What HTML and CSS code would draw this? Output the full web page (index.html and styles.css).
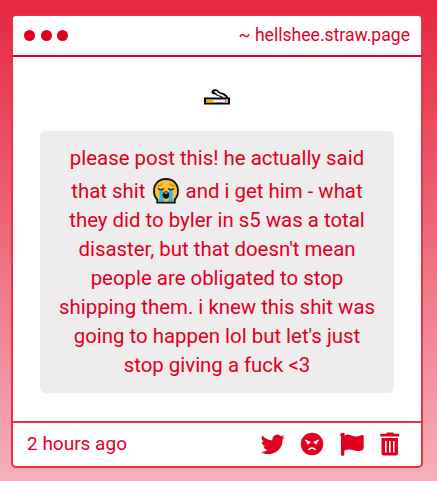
FILE: index.html
```html
<!DOCTYPE html>
<html lang="en">
<head>
<meta charset="utf-8">
<title>hellshee.straw.page</title>
<link rel="stylesheet" href="styles.css">
</head>
<body>
<article class="card">
  <header class="card-header">
    <div class="dots"><span></span><span></span><span></span></div>
    <div class="site">~ hellshee.straw.page</div>
  </header>
  <main class="card-body">
    <svg class="cigarette" viewBox="0 0 28 16" aria-hidden="true">
      <path d="M10 4.500C8.500 2 11 .8 13 1.300C15.500 1.800 15 4 17.500 4.300C20.500 4.500 22.500 6 24.500 9" fill="none" stroke="#000" stroke-width="2"/>
      <path d="M10 4.500C12 3 13 5.500 15 6C17 6 18 8 20 9" fill="none" stroke="#000" stroke-width="2"/>
      <path d="M12 3.300Q14 2.600 15 5Q19 5.600 22.500 9" fill="none" stroke="#ddd" stroke-width="2"/>
      <path d="M2 9.500H26V14.500H2Z" fill="#fff" stroke="#000" stroke-width="2"/>
      <path d="M3 10.500H10.500V13.500H3Z" fill="#ffa600"/>
      <path d="M22 10H23V14H22Z" fill="#f06b3d"/>
      <path d="M23 10H25V14H23Z" fill="#bbb"/>
    </svg>
    <div class="message">please post this! he actually said<br>that shit <svg class="crying" viewBox="0 0 26 26" aria-label="crying face">
      <path d="M13 1C5.500 1 1 6 1 13C1 17 2.200 19.500 4.200 21.500V24.500H21.800V21.500C23.800 19.500 25 17 25 13C25 6 20.500 1 13 1Z" fill="#fcc234" stroke="#111" stroke-width="1.800"/>
      <path d="M6.500 11.500H10V20L13 23L16 20V11.500H19.500V20L21 23.600H5L6.500 20Z" fill="#26b7ee"/>
      <path d="M10 16H16V21L14 23.500H12L10 21Z" fill="#fcc234"/>
      <path d="M4.500 8Q7.500 8 9.500 5.500M21.500 8Q18.500 8 16.500 5.500" fill="none" stroke="#ce851b" stroke-width="1.300"/>
      <path d="M5 10.500Q8 12.700 11 10.500M15 10.500Q18 12.700 21 10.500" fill="none" stroke="#222" stroke-width="1.300"/>
      <ellipse cx="13" cy="17" rx="3.200" ry="3.800" fill="#111"/>
      <path d="M11.500 14.500H14.500V15.500H11.500Z" fill="#fff"/>
    </svg> and i get him - what<br>they did to byler in s5 was a total<br>disaster, but that doesn't mean<br>people are obligated to stop<br>shipping them. i knew this shit was<br>going to happen lol but let's just<br>stop giving a fuck &lt;3</div>
  </main>
  <footer class="card-footer">
    <time>2 hours ago</time>
    <nav class="actions">
      <svg class="icon" viewBox="0 0 24 24"><path d="M23.600 4.900c-.9.400-1.800.6-2.800.8 1-.6 1.800-1.600 2.200-2.700-1 .6-2 1-3.100 1.200A4.900 4.900 0 0 0 11.500 8.600C7.400 8.400 3.800 6.400 1.400 3.500a4.900 4.900 0 0 0 1.500 6.500c-.8 0-1.600-.2-2.200-.6v.1c0 2.400 1.700 4.400 3.900 4.800-.7.200-1.500.2-2.200.1.600 2 2.400 3.400 4.600 3.400A9.900 9.900 0 0 1 0 19.900a14 14 0 0 0 21.500-12.400c.8-.7 1.600-1.600 2.100-2.600Z"/></svg>
      <svg class="icon" viewBox="0 0 24 24"><circle cx="12" cy="12" r="11.200"/><path class="cut" d="M5 8L10.500 10.500M19 8L13.500 10.500M8.300 17.800Q12 14.300 15.700 17.800"/><path class="eye" d="M6 8.500L10 10.500Q9 13 7 11.800ZM18 8.500L14 10.500Q15 13 17 11.800Z"/></svg>
      <svg class="icon flag" viewBox="0 0 24 24"><path d="M4.300 3.700C7.500 1.600 10 3 13 4C16.300 5.100 19 4.200 22.200 3Q23.700 2.600 23.700 4V16.300Q23.700 17.200 22.800 17.700C19 19.900 16 19 13 18C9.800 17 7 17.400 4.300 18.500V22.500Q4.300 23.700 3 23.700H2.200Q1 23.700 1 22.500V4.600A2.300 2.300 0 1 1 4.800 2.300Q4.800 3 4.300 3.700Z"/></svg>
      <svg class="icon" viewBox="0 0 24 24"><path fill-rule="evenodd" d="M2.300 1.700H8L9 .5H15L16 1.700H21.200V4.500H2.300ZM3.500 6H20V21.500Q20 23.500 18 23.500H5.500Q3.500 23.500 3.500 21.500ZM7 9V20.500H8.600V9ZM11 9V20.500H12.600V9ZM15 9V20.500H16.600V9Z"/></svg>
    </nav>
  </footer>
</article>
</body>
</html>
```

FILE: styles.css
```css
* { box-sizing: border-box; }
body {
  margin: 0;
  height: 481px;
  padding: 14px 14px 13px 11px;
  overflow: hidden;
  background: linear-gradient(#e5273f, #f5b0bb);
  font-family: Roboto, sans-serif;
  color: #df001f;
}
.card {
  width: 412px;
  height: 454px;
  display: flex;
  flex-direction: column;
  background: #fff;
  border: 2px solid #e93340;
  border-radius: 5px;
}
.card-header {
  height: 41px;
  flex: none;
  display: flex;
  align-items: center;
  justify-content: space-between;
  padding: 0 11px;
  border-bottom: 2px solid #df001f;
}
.dots { display: flex; gap: 5.500px; }
.dots span { width: 11px; height: 11px; border-radius: 50%; background: currentColor; }
.site { margin-top: -2px; font-size: 17.600px; }
.card-body { flex: 1; padding: 32px 27px 0; }
.cigarette { display: block; width: 28px; height: 16px; margin: 0 auto 26px 163px; }
.message {
  height: 262px;
  padding-top: 13px;
  border-radius: 6px;
  background: #eeeced;
  font-size: 20.400px;
  line-height: 29px;
  text-align: center;
  white-space: nowrap;
}
.crying { width: 26px; height: 26px; margin: 5px 2px 0; vertical-align: -6px; }
.card-footer {
  height: 45px;
  flex: none;
  display: flex;
  align-items: center;
  justify-content: space-between;
  padding: 0 19px 0 14px;
  border-top: 2px solid #e93340;
}
.card-footer time { margin-top: -2px; font-size: 19px; }
.actions { display: flex; gap: 15px; margin-top: -1px; }
.icon { width: 24px; height: 24px; fill: currentColor; }
.flag { margin: 0 -1px 0 1px; }
.cut { fill: none; stroke: #fff; stroke-width: 1.300; }
.eye { fill: #fff; }
```
